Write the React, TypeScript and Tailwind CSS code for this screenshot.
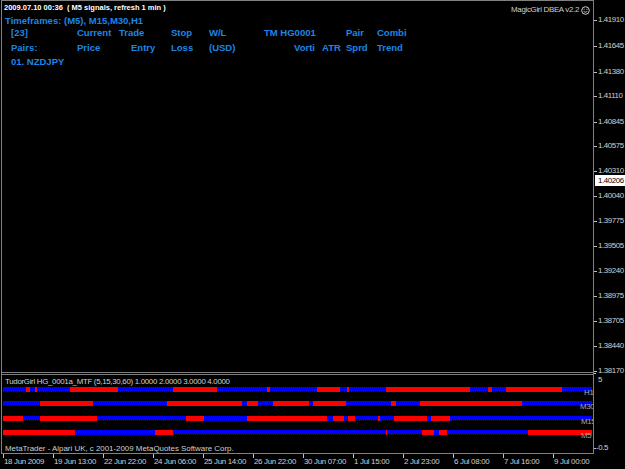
import React from "react";

const PRICES = [
  "1.41910","1.41645","1.41380","1.41110","1.40845","1.40575","1.40310",
  "1.40040","1.39775","1.39505","1.39240","1.38975","1.38705","1.38440","1.38170",
];
const PRICE_Y = [20, 46, 72, 96, 122, 146, 171, 196, 221, 246, 271, 296, 321, 346, 371];

const TIMES = [
  "18 Jun 2009","19 Jun 13:00","22 Jun 22:00","24 Jun 06:00","25 Jun 14:00","26 Jun 22:00",
  "30 Jun 07:00","1 Jul 15:00","2 Jul 23:00","6 Jul 08:00","7 Jul 16:00","9 Jul 00:00",
];

type Row = { first: "r" | "b"; xs: number[]; label: string; labelX: number };
const ROWS: Row[] = [
  { first: "b", label: "H1", labelX: 584, xs: [3,26,30,35,37,70,118,173,217,267,270,317,340,347,349,386,470,488,492,506,562,592] },
  { first: "b", label: "M30", labelX: 580, xs: [3,40,93,167,242,247,258,273,309,313,346,391,396,420,522,592] },
  { first: "r", label: "M15", labelX: 581, xs: [3,23,40,97,186,204,247,327,333,344,348,355,378,380,394,427,431,450,592] },
  { first: "r", label: "M5", labelX: 581, xs: [3,75,155,173,386,387,422,434,439,447,528,592] },
];
const ROW_TOP = [12, 26, 41, 55];

function Smiley() {
  return (
    <svg width="9" height="9" viewBox="0 0 9 9" className="ml-[2px]">
      <circle cx="4.5" cy="4.5" r="3.8" fill="none" stroke="#d0d0d0" strokeWidth="1" />
      <rect x="2.6" y="2.8" width="1" height="1" fill="#d0d0d0" />
      <rect x="5.4" y="2.8" width="1" height="1" fill="#d0d0d0" />
      <path d="M2.6 5.4 Q4.5 7 6.4 5.4" fill="none" stroke="#d0d0d0" strokeWidth="0.9" />
    </svg>
  );
}

function Bar({ row, top }: { row: Row; top: number }) {
  const segs: { w: number; c: "r" | "b" }[] = [];
  for (let i = 0; i < row.xs.length - 1; i++) {
    const c = (i % 2 === 0 ? row.first : row.first === "r" ? "b" : "r") as "r" | "b";
    segs.push({ w: row.xs[i + 1] - row.xs[i], c });
  }
  return (
    <div className="absolute left-px flex h-[5px]" style={{ top }}>
      {segs.map((s, i) =>
        s.c === "r" ? (
          <div key={i} className="h-[5px] bg-[#ff0000]" style={{ width: s.w }} />
        ) : (
          <div key={i} className="h-[5px] border-b border-dotted border-[#0000ff]" style={{ width: s.w }}>
            <div className="h-[4px] bg-[#0000ff]" />
          </div>
        )
      )}
    </div>
  );
}

export default function App() {
  const blue = "text-[#1c86e6]";
  const small = "text-[7.9px] leading-[10px] tracking-[-0.3px]";
  return (
    <div className="w-[625px] h-[469px] bg-black overflow-hidden flex flex-col pl-px font-['Liberation_Sans',Arial,sans-serif]">
      <div className="flex h-[454px]">
        {/* left column: chart + subwindow */}
        <div className="w-[593px] h-[454px] border-l border-t border-r border-b border-[#808080] flex flex-col">
          {/* main chart */}
          <div className="h-[371px] relative">
            <div className="flex justify-between pl-[2px] pr-[3px]">
              <div className="mt-[2px] text-[7.5px] leading-[9px] font-bold text-white whitespace-pre">
                2009.07.10 00:36  ( M5 signals, refresh 1 min )
              </div>
              <div className={`mt-[4px] flex items-center ${small} text-[#d0d0d0]`}>
                <span>MagicGirl DBEA v2.2</span>
                <Smiley />
              </div>
            </div>
            <div className={`pl-[3px] text-[9.5px] leading-[11px] font-bold ${blue} whitespace-pre`}>
              Timeframes: (M5), M15,M30,H1
            </div>
            <div className={`pl-[9px] mt-[1px] text-[9.5px] leading-[11px] font-bold ${blue} whitespace-pre`}>
              <div className="flex h-[15px]">
                <span className="w-[66px]">[23]</span>
                <span className="w-[42px]">Current</span>
                <span className="w-[52px]">Trade</span>
                <span className="w-[38px]">Stop</span>
                <span className="w-[55px]">W/L</span>
                <span className="w-[82px]">TM HG0001</span>
                <span className="w-[31px]">Pair</span>
                <span>Combi</span>
              </div>
              <div className="flex h-[14px]">
                <span className="w-[66px]">Pairs:</span>
                <span className="w-[54px]">Price</span>
                <span className="w-[40px]">Entry</span>
                <span className="w-[38px]">Loss</span>
                <span className="w-[85px]">(USD)</span>
                <span className="w-[28px]">Vorti</span>
                <span className="w-[24px]">ATR</span>
                <span className="w-[31px]">Sprd</span>
                <span>Trend</span>
              </div>
              <div className="flex h-[14px]">
                <span>01. NZDJPY</span>
              </div>
            </div>
          </div>
          {/* separator */}
          <div className="h-[3px] border-t border-b border-[#808080]" />
          {/* sub window */}
          <div className="flex-1 relative overflow-hidden">
            <div className={`pl-[3px] pt-[2px] ${small} text-[#d0d0d0] whitespace-pre`}>
              TudorGirl HG_0001a_MTF (5,15,30,60) 1.0000 2.0000 3.0000 4.0000
            </div>
            {ROWS.map((r, i) => (
              <Bar key={i} row={r} top={ROW_TOP[i]} />
            ))}
            {ROWS.map((r, i) => (
              <div
                key={"l" + i}
                className={`absolute ${small} text-[#a8a8a8]`}
                style={{ left: r.labelX - 2, top: ROW_TOP[i] + 1 }}
              >
                {r.label}
              </div>
            ))}
            <div className="absolute left-[3px] top-[69px] text-[7.9px] leading-[10px] tracking-[0px] text-[#d0d0d0] whitespace-pre">
              MetaTrader - Alpari UK, c 2001-2009 MetaQuotes Software Corp.
            </div>
          </div>
        </div>
        {/* right price axis */}
        <div className={`w-[31px] relative ${small} tracking-[-0.4px] text-[#d0d0d0]`}>
          {PRICES.map((p, i) => (
            <React.Fragment key={p}>
              <div className="absolute left-0 w-[3px] h-px bg-[#c0c0c0]" style={{ top: PRICE_Y[i] }} />
              <div className="absolute left-[4px]" style={{ top: PRICE_Y[i] - 5 }}>
                {p}
              </div>
            </React.Fragment>
          ))}
          <div className="absolute left-[1px] top-[175px] w-[30px] h-[11px] bg-white text-black pl-[3px] leading-[11px]">
            1.40206
          </div>
          <div className="absolute left-0 top-[373px] w-[2px] h-px bg-[#c0c0c0]" />
          <div className="absolute left-[4px] top-[375px]">5</div>
          <div className="absolute left-0 top-[448px] w-[2px] h-px bg-[#c0c0c0]" />
          <div className="absolute left-[2px] top-[443px]">-0.5</div>
        </div>
      </div>
      {/* time axis */}
      <div className={`h-[15px] relative ${small} text-[#d0d0d0]`}>
        {TIMES.map((t, i) => (
          <React.Fragment key={t}>
            <div className="absolute top-0 w-px h-[4px] bg-[#c0c0c0]" style={{ left: 2 + 50 * i }} />
            <div className="absolute top-[3px] whitespace-pre" style={{ left: 3 + 50 * i }}>
              {t}
            </div>
          </React.Fragment>
        ))}
      </div>
    </div>
  );
}
